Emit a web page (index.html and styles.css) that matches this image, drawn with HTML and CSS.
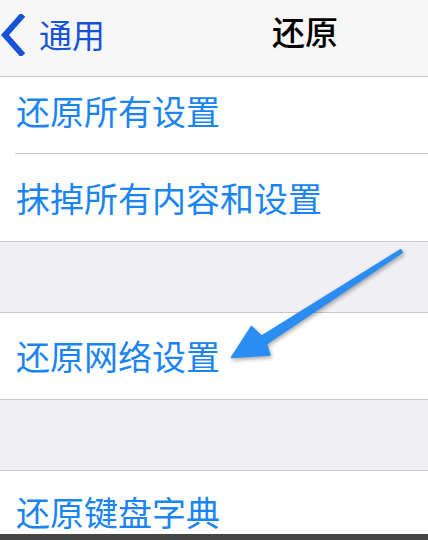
FILE: index.html
```html
<!DOCTYPE html>
<html lang="zh-CN">
<head>
    <meta charset="UTF-8">
    <meta name="viewport" content="width=device-width, initial-scale=1.0">
    <title>还原</title>
    <link rel="stylesheet" href="styles.css">
</head>
<body>
    <div class="screen">
        <div class="nav-bar">
            <div class="back-btn">
                <svg class="chevron" width="26" height="42" viewBox="0 0 26 42">
                    <path d="M21 3 L5 21 L21 39" fill="none" stroke="#1652d6" stroke-width="6" stroke-linecap="square"/>
                </svg>
                <span>通用</span>
            </div>
            <div class="nav-title">还原</div>
        </div>

        <div class="group">
            <div class="row row-first">还原所有设置</div>
            <div class="row row-second">抹掉所有内容和设置</div>
        </div>

        <div class="spacer"></div>

        <div class="group">
            <div class="row">还原网络设置</div>
        </div>

        <div class="spacer"></div>

        <div class="group group-last">
            <div class="row row-last">还原键盘字典</div>
        </div>

        <!-- annotation arrow drawn over the list -->
        <svg class="arrow" width="428" height="540" viewBox="0 0 428 540">
            <polygon points="400.7,249.7 261.6,336.2 251.5,326.5 231.5,357.5 270,355 266.4,343.8 402.3,252.3"
                     fill="#2a8df2" stroke="#2a8df2" stroke-width="1.5" stroke-linejoin="round"/>
        </svg>
    </div>
    <div class="bottom-bar"></div>
</body>
</html>
```

FILE: styles.css
```css
body {
    margin: 0;
    background-color: #efeff4;
    font-family: "Noto Sans CJK SC", "Noto Sans", sans-serif;
}
.screen {
    position: relative;
}
.nav-bar {
    height: 76px;
    background-color: #f7f7f8;
    border-bottom: 1px solid #c8c7cc;
    position: relative;
    display: flex;
    align-items: center;
}
.back-btn {
    display: flex;
    align-items: center;
    color: #1652d6;
    font-size: 33px;
    line-height: 1;
    padding-bottom: 8px;
}
.back-btn span {
    margin-left: 13px;
}
.chevron {
    display: block;
    margin-top: 2px;
}
.nav-title {
    position: absolute;
    left: 272px;
    top: 15px;
    font-size: 33px;
    line-height: 1;
    color: #000;
    font-weight: 500;
}
.group {
    background-color: #fff;
    border-bottom: 1px solid #c8c7cc;
}
.group-last {
    border-bottom: none;
}
.spacer {
    height: 70px;
    border-bottom: 1px solid #c8c7cc;
}
.row {
    height: 86px;
    display: flex;
    align-items: center;
    padding-left: 16px;
    font-size: 34px;
    line-height: 1;
    color: #1b84f3;
}
.row-first {
    height: 76px;
    padding-bottom: 9px;
    box-sizing: border-box;
}
.row-second {
    height: 87px;
    margin-left: 15px;
    padding-left: 1px;
    border-top: 1px solid #c8c7cc;
}
.row-last {
    height: 63px;
    align-items: flex-start;
    padding-top: 24px;
    box-sizing: border-box;
}
.arrow {
    position: absolute;
    top: 0;
    left: 0;
    filter: drop-shadow(1px 2px 2px rgba(0, 0, 0, 0.35));
}
.bottom-bar {
    height: 6px;
    background-color: #454545;
}
```
